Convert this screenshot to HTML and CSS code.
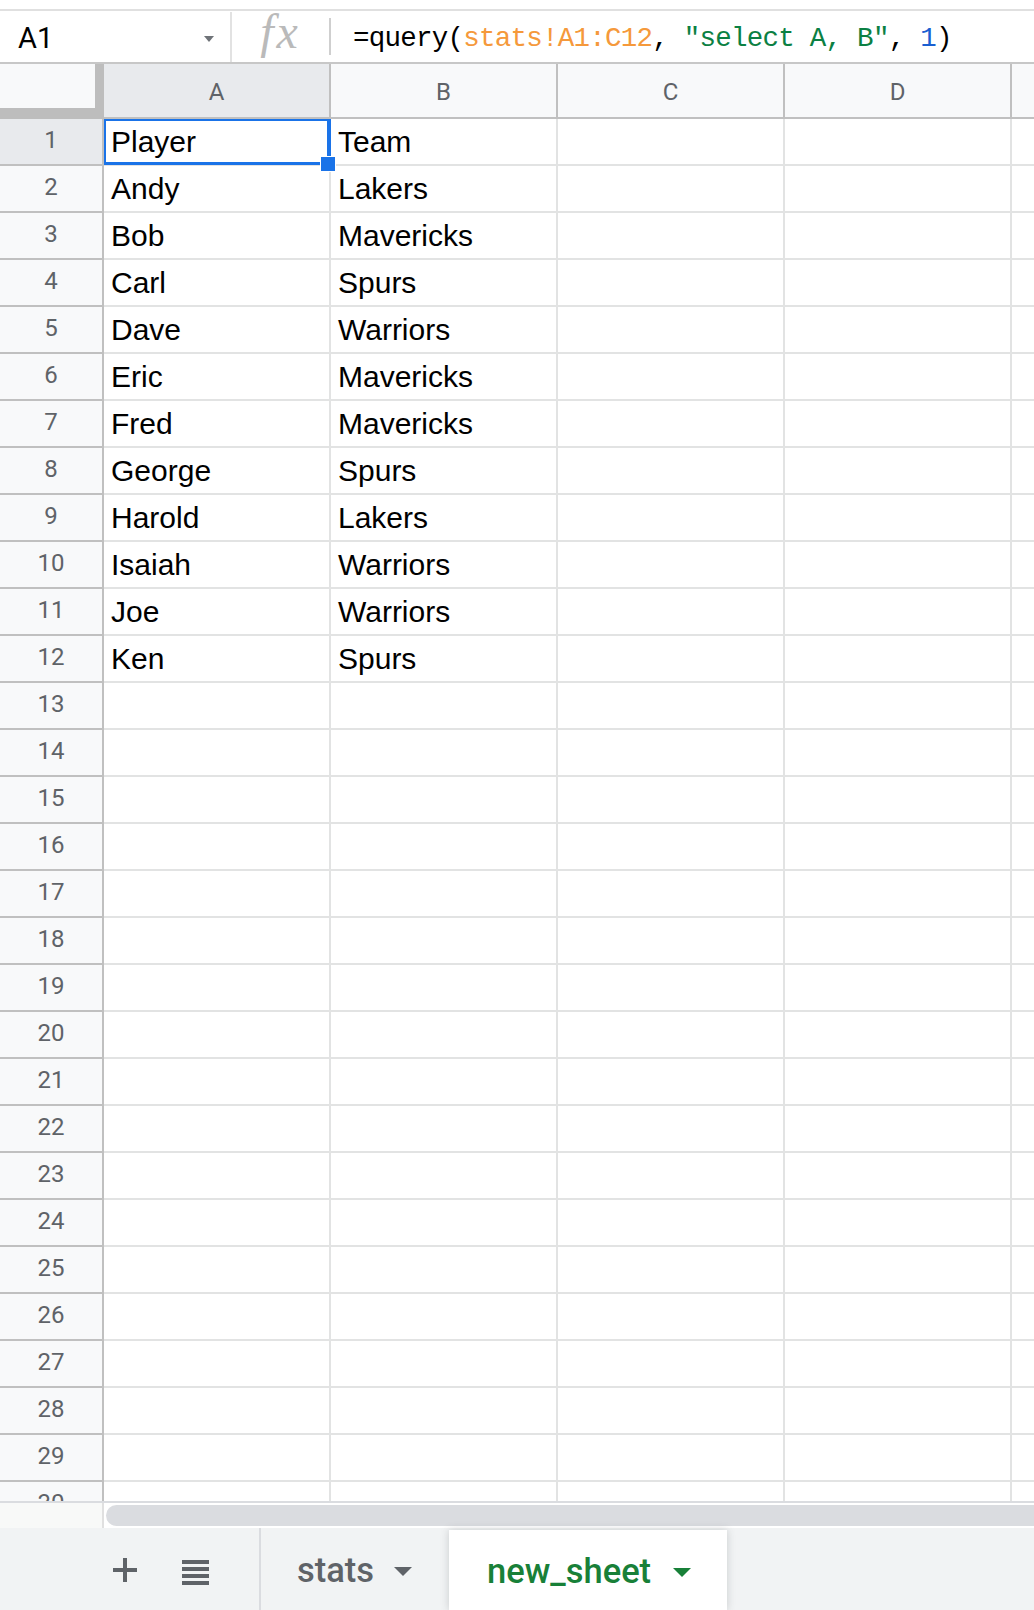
FILE: index.html
```html
<!DOCTYPE html>
<html>
<head>
<meta charset="utf-8">
<link rel="stylesheet" href="styles.css">
</head>
<body>
<div class="app">
  <div class="topgap"></div>
  <div class="formula-bar">
    <div class="namebox"><span class="name">A1</span><span class="caret"></span></div>
    <div class="vdiv"></div>
    <div class="fx">fx</div>
    <div class="vdiv2"></div>
    <div class="formula">=query(<span class="f-range">stats!A1:C12</span>, <span class="f-str">"select A, B"</span>, <span class="f-num">1</span>)</div>
  </div>

  <div class="sheet">
    <div class="row hdr">
      <div class="corner"><div class="corner-in"></div></div>
      <div class="ch sel">A</div><div class="ch">B</div><div class="ch">C</div><div class="ch">D</div><div class="ch e"></div>
    </div>
    <div class="row"><div class="rh sel">1</div><div class="c">Player</div><div class="c">Team</div><div class="c"></div><div class="c"></div><div class="c e"></div></div>
    <div class="row"><div class="rh">2</div><div class="c">Andy</div><div class="c">Lakers</div><div class="c"></div><div class="c"></div><div class="c e"></div></div>
    <div class="row"><div class="rh">3</div><div class="c">Bob</div><div class="c">Mavericks</div><div class="c"></div><div class="c"></div><div class="c e"></div></div>
    <div class="row"><div class="rh">4</div><div class="c">Carl</div><div class="c">Spurs</div><div class="c"></div><div class="c"></div><div class="c e"></div></div>
    <div class="row"><div class="rh">5</div><div class="c">Dave</div><div class="c">Warriors</div><div class="c"></div><div class="c"></div><div class="c e"></div></div>
    <div class="row"><div class="rh">6</div><div class="c">Eric</div><div class="c">Mavericks</div><div class="c"></div><div class="c"></div><div class="c e"></div></div>
    <div class="row"><div class="rh">7</div><div class="c">Fred</div><div class="c">Mavericks</div><div class="c"></div><div class="c"></div><div class="c e"></div></div>
    <div class="row"><div class="rh">8</div><div class="c">George</div><div class="c">Spurs</div><div class="c"></div><div class="c"></div><div class="c e"></div></div>
    <div class="row"><div class="rh">9</div><div class="c">Harold</div><div class="c">Lakers</div><div class="c"></div><div class="c"></div><div class="c e"></div></div>
    <div class="row"><div class="rh">10</div><div class="c">Isaiah</div><div class="c">Warriors</div><div class="c"></div><div class="c"></div><div class="c e"></div></div>
    <div class="row"><div class="rh">11</div><div class="c">Joe</div><div class="c">Warriors</div><div class="c"></div><div class="c"></div><div class="c e"></div></div>
    <div class="row"><div class="rh">12</div><div class="c">Ken</div><div class="c">Spurs</div><div class="c"></div><div class="c"></div><div class="c e"></div></div>
    <div class="row"><div class="rh">13</div><div class="c"></div><div class="c"></div><div class="c"></div><div class="c"></div><div class="c e"></div></div>
    <div class="row"><div class="rh">14</div><div class="c"></div><div class="c"></div><div class="c"></div><div class="c"></div><div class="c e"></div></div>
    <div class="row"><div class="rh">15</div><div class="c"></div><div class="c"></div><div class="c"></div><div class="c"></div><div class="c e"></div></div>
    <div class="row"><div class="rh">16</div><div class="c"></div><div class="c"></div><div class="c"></div><div class="c"></div><div class="c e"></div></div>
    <div class="row"><div class="rh">17</div><div class="c"></div><div class="c"></div><div class="c"></div><div class="c"></div><div class="c e"></div></div>
    <div class="row"><div class="rh">18</div><div class="c"></div><div class="c"></div><div class="c"></div><div class="c"></div><div class="c e"></div></div>
    <div class="row"><div class="rh">19</div><div class="c"></div><div class="c"></div><div class="c"></div><div class="c"></div><div class="c e"></div></div>
    <div class="row"><div class="rh">20</div><div class="c"></div><div class="c"></div><div class="c"></div><div class="c"></div><div class="c e"></div></div>
    <div class="row"><div class="rh">21</div><div class="c"></div><div class="c"></div><div class="c"></div><div class="c"></div><div class="c e"></div></div>
    <div class="row"><div class="rh">22</div><div class="c"></div><div class="c"></div><div class="c"></div><div class="c"></div><div class="c e"></div></div>
    <div class="row"><div class="rh">23</div><div class="c"></div><div class="c"></div><div class="c"></div><div class="c"></div><div class="c e"></div></div>
    <div class="row"><div class="rh">24</div><div class="c"></div><div class="c"></div><div class="c"></div><div class="c"></div><div class="c e"></div></div>
    <div class="row"><div class="rh">25</div><div class="c"></div><div class="c"></div><div class="c"></div><div class="c"></div><div class="c e"></div></div>
    <div class="row"><div class="rh">26</div><div class="c"></div><div class="c"></div><div class="c"></div><div class="c"></div><div class="c e"></div></div>
    <div class="row"><div class="rh">27</div><div class="c"></div><div class="c"></div><div class="c"></div><div class="c"></div><div class="c e"></div></div>
    <div class="row"><div class="rh">28</div><div class="c"></div><div class="c"></div><div class="c"></div><div class="c"></div><div class="c e"></div></div>
    <div class="row"><div class="rh">29</div><div class="c"></div><div class="c"></div><div class="c"></div><div class="c"></div><div class="c e"></div></div>
    <div class="row"><div class="rh">30</div><div class="c"></div><div class="c"></div><div class="c"></div><div class="c"></div><div class="c e"></div></div>

    <div class="selection"></div>
    <div class="handle"></div>
  </div>

  <div class="scrollrow">
    <div class="scroll-corner"></div>
    <div class="track"><div class="thumb"></div></div>
  </div>

  <div class="tabbar">
    <div class="tab-tools">
      <svg class="ico-plus" width="24" height="24" viewBox="0 0 24 24"><path d="M10 0h4v10h10v4H14v10h-4V14H0v-4h10z" fill="#5f6368"/></svg>
      <svg class="ico-list" width="27" height="25" viewBox="0 0 27 25"><rect x="0" y="0" width="27" height="4" fill="#5f6368"/><rect x="0" y="7" width="27" height="4" fill="#5f6368"/><rect x="0" y="14" width="27" height="4" fill="#5f6368"/><rect x="0" y="21" width="27" height="4" fill="#5f6368"/></svg>
    </div>
    <div class="tab"><span class="tab-name">stats</span><span class="tri"></span></div>
    <div class="tab active"><span class="tab-name">new_sheet</span><span class="tri"></span></div>
  </div>
</div>
</body>
</html>
```

FILE: styles.css
```css
* { box-sizing: border-box; }

html, body {
  margin: 0;
  padding: 0;
  background: #ffffff;
}

body {
  width: 1034px;
  height: 1610px;
  overflow: hidden;
  font-family: Roboto, "Liberation Sans", Arial, sans-serif;
}

.app {
  display: flex;
  flex-direction: column;
  width: 1034px;
  height: 1610px;
}

.topgap { height: 9px; flex: none; }

/* formula bar */
.formula-bar {
  flex: none;
  height: 55px;
  border-top: 2px solid #e0e0e0;
  border-bottom: 2px solid #c7c7c7;
  display: flex;
  align-items: stretch;
}

.namebox {
  width: 230px;
  display: flex;
  align-items: center;
  justify-content: space-between;
  padding: 2px 16px 0 18px;
}

.name {
  font-size: 29px;
  color: #000;
}

.caret {
  width: 0;
  height: 0;
  border-left: 5.5px solid transparent;
  border-right: 5.5px solid transparent;
  border-top: 6px solid #6f7378;
  margin-top: 2px;
}

.vdiv {
  width: 2px;
  background: #e2e2e2;
  margin-top: 1px;
}

.fx {
  width: 97px;
  display: flex;
  align-items: center;
  justify-content: center;
  padding: 0 0 10px 0;
  font-family: "Liberation Serif", "DejaVu Serif", serif;
  font-style: italic;
  font-size: 48px;
  letter-spacing: 3px;
  color: #bababa;
}

.vdiv2 {
  width: 2px;
  background: #cfcfcf;
  margin: 7px 0;
}

.formula {
  flex: 1;
  display: flex;
  align-items: center;
  padding: 3px 0 0 22px;
  font-family: "Liberation Mono", "DejaVu Sans Mono", monospace;
  font-size: 27.5px;
  letter-spacing: -0.75px;
  color: #000;
  white-space: pre;
}

.f-range { color: #f5993b; }
.f-str { color: #0b8043; }
.f-num { color: #1a5fd1; }

/* sheet grid */
.sheet {
  flex: none;
  position: relative;
  height: 1439px;
  overflow: hidden;
  border-bottom: 2px solid #dadce0;
}

.row {
  display: flex;
  height: 47px;
}

.row.hdr { height: 55px; }

.corner {
  width: 104px;
  height: 55px;
  background: #bdbdbd;
}

.corner-in {
  width: 95px;
  height: 44px;
  background: #f8f9fa;
}

.ch {
  width: 227px;
  flex: none;
  background: #f8f9fa;
  border-right: 2px solid #c0c0c0;
  border-bottom: 2px solid #c0c0c0;
  display: flex;
  align-items: center;
  justify-content: center;
  padding-top: 3px;
  font-size: 24px;
  color: #5f6368;
}

.ch.sel { background: #e8eaed; }
.ch.e { width: 22px; border-right: none; }

.rh {
  width: 104px;
  flex: none;
  background: #f8f9fa;
  border-right: 2px solid #c0c0c0;
  border-bottom: 2px solid #c0c0c0;
  display: flex;
  align-items: center;
  justify-content: center;
  padding-bottom: 3px;
  font-size: 24px;
  color: #5f6368;
}

.rh.sel { background: #e8eaed; }

.c {
  width: 227px;
  flex: none;
  border-right: 2px solid #e2e3e3;
  border-bottom: 2px solid #e2e3e3;
  padding: 1px 0 0 7px;
  font-family: "Liberation Sans", Arial, sans-serif;
  font-size: 30px;
  line-height: 44px;
  color: #000;
  white-space: nowrap;
  overflow: hidden;
}

.c.e { width: 22px; border-right: none; }

.selection {
  position: absolute;
  left: 104px;
  top: 55px;
  width: 227px;
  height: 46px;
  border-top: 2px solid #1a73e8;
  border-left: 2px solid #1a73e8;
  border-right: 4px solid #1a73e8;
  border-bottom: 3px solid #1a73e8;
}

.handle {
  position: absolute;
  left: 320px;
  top: 92px;
  width: 16px;
  height: 16px;
  background: #1a73e8;
  border: 1px solid #ffffff;
}

/* horizontal scroll row */
.scrollrow {
  flex: none;
  height: 25px;
  display: flex;
}

.scroll-corner {
  width: 104px;
  background: #f8f9f8;
  border-right: 2px solid #e0e0e0;
}

.track {
  flex: 1;
  padding: 2px 0 2px 2px;
  overflow: hidden;
}

.thumb {
  width: 960px;
  height: 21px;
  border-radius: 10.5px;
  background: #dadce0;
}

/* sheet tabs */
.tabbar {
  flex: none;
  height: 82px;
  background: #f1f3f4;
  display: flex;
  align-items: stretch;
}

.tab-tools {
  width: 261px;
  border-right: 2px solid #dadce0;
  display: flex;
  align-items: center;
  padding: 2px 0 0 113px;
  gap: 45px;
}

.ico-list { margin-top: 4px; }

.tab {
  display: flex;
  align-items: center;
  padding: 2px 0 0 36px;
  width: 188px;
  font-size: 34.5px;
  font-weight: 500;
  color: #5f6368;
}

.tab .tri {
  width: 0;
  height: 0;
  border-left: 9px solid transparent;
  border-right: 9px solid transparent;
  border-top: 9px solid currentColor;
  margin-left: 20px;
  margin-top: 2px;
}

.tab.active {
  width: 278px;
  margin-top: 2px;
  padding-left: 38px;
  background: #ffffff;
  color: #188038;
  box-shadow: 0 0 8px rgba(60, 64, 67, 0.22);
}

.tab.active .tri { margin-left: 22px; }
```
